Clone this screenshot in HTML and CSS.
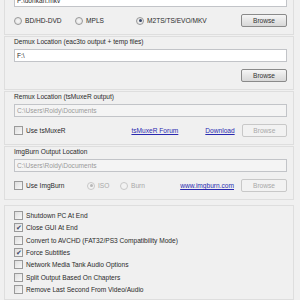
FILE: index.html
```html
<!DOCTYPE html>
<html lang="en">
<head>
    <meta charset="UTF-8">
    <title>Options</title>
    <link rel="stylesheet" href="styles.css">
</head>
<body>
    <div class="panel first">
        <div class="textbox">F:\donkan.mkv</div>
        <div class="row">
            <span class="radio"></span><span class="opt w-bd">BD/HD-DVD</span>
            <span class="radio"></span><span class="opt w-mpls">MPLS</span>
            <span class="radio on"></span><span class="opt">M2TS/TS/EVO/MKV</span>
            <span class="button">Browse</span>
        </div>
    </div>

    <div class="panel">
        <div class="label">Demux Location (eac3to output + temp files)</div>
        <div class="textbox">F:\</div>
        <div class="row end">
            <span class="button">Browse</span>
        </div>
    </div>

    <div class="panel">
        <div class="label">Remux Location (tsMuxeR output)</div>
        <div class="textbox disabled">C:\Users\Roidy\Documents</div>
        <div class="row">
            <span class="check"></span><span class="opt w-use">Use tsMuxeR</span>
            <a class="link w-forum">tsMuxeR Forum</a>
            <a class="link">Download</a>
            <span class="button disabled">Browse</span>
        </div>
    </div>

    <div class="panel">
        <div class="label">ImgBurn Output Location</div>
        <div class="textbox disabled">C:\Users\Roidy\Documents</div>
        <div class="row">
            <span class="check"></span><span class="opt w-img">Use ImgBurn</span>
            <span class="radio dim on"></span><span class="opt grey w-iso">ISO</span>
            <span class="radio dim"></span><span class="opt grey">Burn</span>
            <a class="link">www.imgburn.com</a>
            <span class="button disabled">Browse</span>
        </div>
    </div>

    <div class="panel last">
        <div class="checks">
            <div class="item"><span class="check"></span>Shutdown PC At End</div>
            <div class="item"><span class="check on"></span>Close GUI At End</div>
            <div class="item"><span class="check"></span>Convert to AVCHD (FAT32/PS3 Compatibility Mode)</div>
            <div class="item"><span class="check on"></span>Force Subtitles</div>
            <div class="item"><span class="check"></span>Network Media Tank Audio Options</div>
            <div class="item"><span class="check"></span>Split Output Based On Chapters</div>
            <div class="item"><span class="check"></span>Remove Last Second From Video/Audio</div>
        </div>
    </div>
</body>
</html>
```

FILE: styles.css
```css
body {
    margin: 0;
    background-color: #f0f0f0;
    font-family: "Liberation Sans", Arial, sans-serif;
    font-size: 6.6px;
    color: #2a2a2a;
    white-space: nowrap;
    overflow: hidden;
}
.panel {
    border: 1px solid #dedede;
    margin: 0 6px 1px 4px;
    padding: 0 6px 7px 9px;
}
.panel.first {
    margin-top: -11px;
    padding-top: 4px;
}
.panel.last {
    margin-top: 5px;
    padding-top: 3px;
    padding-bottom: 3px;
    height: 87px;
}
.label {
    height: 9px;
    line-height: 9px;
}
.textbox {
    height: 11px;
    line-height: 11px;
    border: 1px solid #c2c4c8;
    background-color: white;
    padding-left: 2px;
    margin-top: 3px;
}
.first .textbox {
    margin-top: 0;
}
.textbox.disabled {
    background-color: #f4f4f4;
    color: #9a9a9a;
}
.row {
    display: flex;
    align-items: center;
    height: 13px;
    margin-top: 7px;
}
.row.end {
    justify-content: flex-end;
}
.opt {
    margin-left: 3px;
}
.w-bd { width: 50px; }
.w-mpls { width: 50px; }
.w-use { width: 107px; }
.w-forum { margin-right: 27px; }
.w-img { width: 61px; }
.w-iso { width: 22px; }
.grey {
    color: #a8a8a8;
}
.link {
    color: #2a2ab0;
    text-decoration: underline;
}
.row .link:last-of-type {
    margin-left: auto;
    margin-right: 7px;
}
.row .w-forum {
    margin-left: 0;
}
.button {
    margin-left: auto;
    width: 44px;
    height: 11px;
    line-height: 11px;
    text-align: center;
    border: 1px solid #8a8a8a;
    border-radius: 2px;
    background: linear-gradient(#f6f6f6, #e6e6e6 50%, #d8d8d8);
    color: #333;
}
.link + .button {
    margin-left: 0;
}
.button.disabled {
    border-color: #c8c8c8;
    background: #f2f2f2;
    color: #a8a8a8;
}
.radio {
    width: 6px;
    height: 6px;
    border: 1px solid #999;
    border-radius: 50%;
    background: radial-gradient(#f8f8f8, #dcdcdc);
    display: flex;
    align-items: center;
    justify-content: center;
    flex-shrink: 0;
}
.radio.on::after {
    content: "";
    width: 3px;
    height: 3px;
    border-radius: 50%;
    background-color: #3a4a6a;
}
.radio.dim {
    border-color: #c8c8c8;
    background: #f2f2f2;
}
.radio.dim.on::after {
    background-color: #b8b8b8;
}
.check {
    width: 7px;
    height: 7px;
    border: 1px solid #9a9a9a;
    background: linear-gradient(135deg, #dedede, #f8f8f8);
    display: inline-block;
    position: relative;
    flex-shrink: 0;
}
.check.on::after {
    content: "\2714";
    position: absolute;
    left: 1px;
    top: -1px;
    font-size: 7px;
    line-height: 9px;
    color: #3c4a68;
}
.checks {
    display: flex;
    flex-direction: column;
}
.item {
    display: flex;
    align-items: center;
    height: 12.45px;
}
.item .check {
    margin-right: 3px;
}
```
